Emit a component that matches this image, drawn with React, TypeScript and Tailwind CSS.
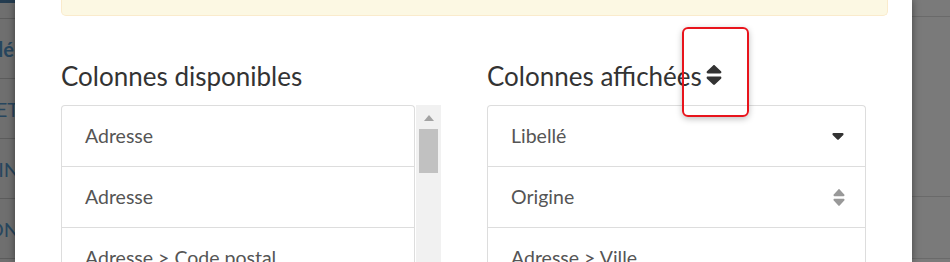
import React from "react";

const font = { fontFamily: '"Source Sans Pro", Lato, "Liberation Sans", sans-serif' };

function SortIcon({ className }: { className?: string }) {
  return (
    <svg viewBox="5 55 310 402" preserveAspectRatio="none" className={className} fill="currentColor">
      <path d="M41 288h238c21.4 0 32.1 25.9 17 41L177 448c-9.4 9.4-24.6 9.4-33.9 0L24 329c-15.1-15.1-4.4-41 17-41zm255-105L177 64c-9.4-9.4-24.6-9.4-33.9 0L24 183c-15.1 15.1-4.4 41 17 41h238c21.4 0 32.1-25.9 17-41z" />
    </svg>
  );
}

function CaretDown({ className }: { className?: string }) {
  return (
    <svg viewBox="0 0 320 200" className={className} fill="currentColor">
      <path d="M31 0h258c28 0 42 34 22 54L182 183c-12 12-32 12-44 0L9 54C-11 34 3 0 31 0z" />
    </svg>
  );
}

const available = ["Adresse", "Adresse", "Adresse > Code postal"];
const shown = [
  { label: "Libellé", icon: "caret" },
  { label: "Origine", icon: "sort" },
  { label: "Adresse > Ville", icon: "" },
];

export default function App() {
  return (
    <div className="relative flex h-[262px] w-[950px] overflow-hidden bg-white" style={font}>
      {/* backdrop left */}
      <div className="w-[15px] shrink-0 bg-[#6f6f6f] overflow-hidden">
        <div className="h-[3px] bg-[#243c50]" />
        <div className="h-[16px] border-b border-[#5c5c5c]" />
        {["lé", "ET", "IN", "ON"].map((t, i) => (
          <div
            key={i}
            className={`flex h-[60px] items-center justify-end whitespace-nowrap border-b border-[#5c5c5c] text-[20px] text-[#27465e] ${i === 0 ? "font-bold" : ""}`}
          >
            <span className={i === 0 ? "mr-[1px]" : "-mr-[4px]"}>{t}</span>
          </div>
        ))}
      </div>

      {/* modal */}
      <div className="relative z-10 w-[897px] shrink-0 bg-white px-[46px] shadow-[0_0_8px_rgba(0,0,0,0.45)]">
        <div className="h-[16px] w-[827px] rounded-b-[5px] border border-t-0 border-[#faebcc] bg-[#fcf8e3]" />

        <div className="mt-[44px] grid grid-cols-[380px_379px] gap-x-[46px]">
          <div>
            <h3 className="h-[45px] text-[26px] leading-[32px] text-[#333]">Colonnes disponibles</h3>
            <div className="flex">
              <ul className="w-[354px] overflow-hidden rounded-t-[4px] border border-b-0 border-[#ddd]">
                {available.map((a, i) => (
                  <li
                    key={i}
                    className="flex h-[61px] items-center border-b border-[#ddd] pl-[23px] text-[19.5px] text-[#555]"
                  >
                    {a}
                  </li>
                ))}
              </ul>
              <div className="ml-[1px] h-[160px] w-[25px] bg-[#f1f1f1] pt-[10px]">
                <div className="mx-auto h-0 w-0 border-x-[5px] border-b-[6px] border-x-transparent border-b-[#a3a3a3]" />
                <div className="mx-auto mt-[8px] h-[44px] w-[19px] bg-[#c1c1c1]" />
              </div>
            </div>
          </div>

          <div>
            <h3 className="flex h-[45px] items-start text-[26px] leading-[32px] text-[#333]">
              Colonnes affichées
              <SortIcon className="ml-[4px] mt-[5px] h-[20px] w-[16px]" />
            </h3>
            <ul className="w-[379px] overflow-hidden rounded-t-[4px] border border-b-0 border-[#ddd]">
              {shown.map((s, i) => (
                <li
                  key={i}
                  className="flex h-[61px] items-center justify-between border-b border-[#ddd] pl-[23px] pr-[20px] text-[19.5px] text-[#555]"
                >
                  <span>{s.label}</span>
                  {s.icon === "caret" && <CaretDown className="h-[7px] w-[14px] text-[#333]" />}
                  {s.icon === "sort" && <SortIcon className="h-[17px] w-[12px] text-[#999]" />}
                </li>
              ))}
            </ul>
          </div>
        </div>
      </div>

      {/* backdrop right */}
      <div className="flex-1 bg-[#7a7a7a]">
        <div className="h-[17px] border-b border-[#6a6a6a]" />
        <div className="h-[180px] border-b border-[#6a6a6a]" />
        <div className="h-[62px] border-b border-[#6a6a6a]" />
      </div>

      {/* annotation */}
      <div className="absolute left-[682px] top-[27px] z-20 h-[90px] w-[67px] rounded-[6px] border-2 border-[#e8141c] shadow-[0_2px_6px_rgba(0,0,0,0.25)]" />
    </div>
  );
}
